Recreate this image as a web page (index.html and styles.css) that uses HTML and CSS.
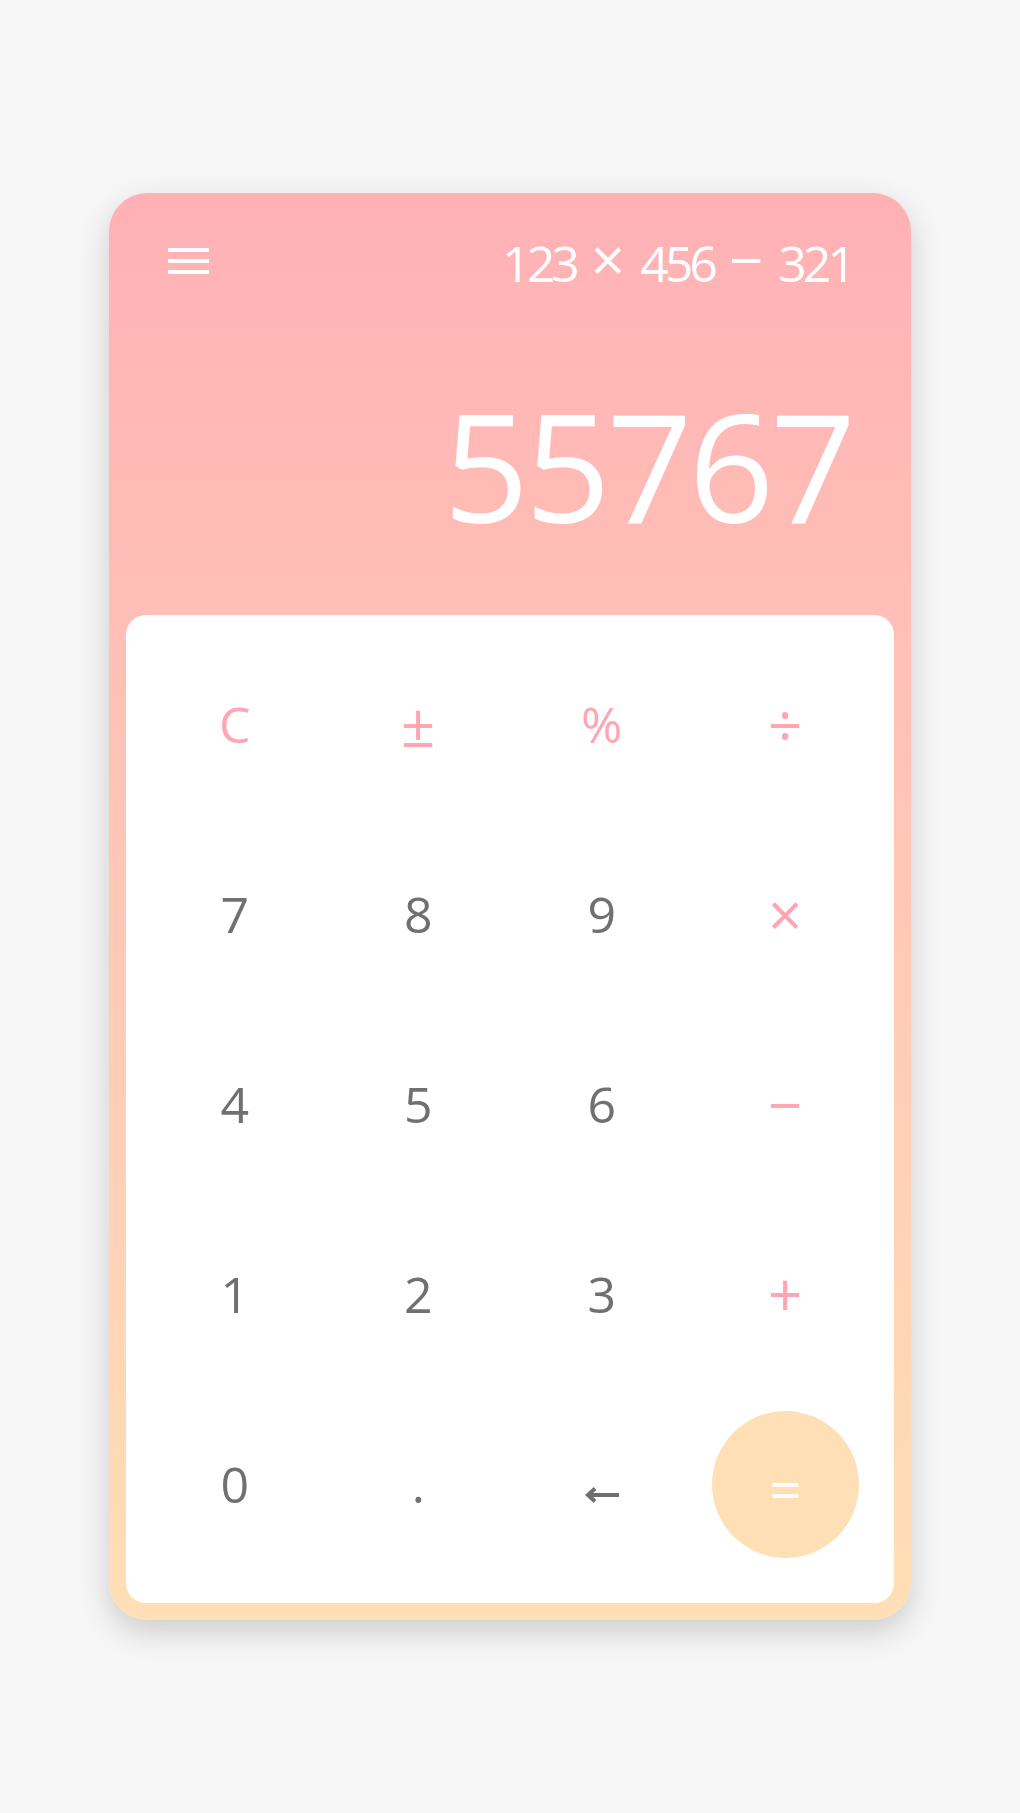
FILE: index.html
```html
<!DOCTYPE html>
<html lang="en">
<head>
    <meta charset="UTF-8">
    <meta name="viewport" content="width=device-width, initial-scale=1.0">
    <title>Calculator</title>
    <link rel="stylesheet" href="styles.css">
</head>
<body>

    <div class="calc">
        <div class="screen">
            <div class="topbar">
                <button class="menu" aria-label="menu">
                    <span></span><span></span><span></span>
                </button>
                <div class="expr">123 <span class="sign">×</span> 456 <span class="sign">−</span> 321</div>
            </div>
            <div class="result">55767</div>
        </div>

        <div class="keypad">
            <button class="key op">C</button>
            <button class="key op sym">±</button>
            <button class="key op">%</button>
            <button class="key op sym">÷</button>

            <button class="key">7</button>
            <button class="key">8</button>
            <button class="key">9</button>
            <button class="key op sym">×</button>

            <button class="key">4</button>
            <button class="key">5</button>
            <button class="key">6</button>
            <button class="key op sym">−</button>

            <button class="key">1</button>
            <button class="key">2</button>
            <button class="key">3</button>
            <button class="key op sym">+</button>

            <button class="key">0</button>
            <button class="key">.</button>
            <button class="key back" aria-label="backspace">
                <svg width="34" height="16" viewBox="0 0 34 16">
                    <path d="M3 8H34M10 1.5L3 8L10 14.5" fill="none" stroke="#6f6f6f" stroke-width="4"/>
                </svg>
            </button>
            <button class="key eq"><span class="circle">=</span></button>
        </div>
    </div>

</body>
</html>
```

FILE: styles.css
```css
body {
    margin: 0;
    padding: 0;
    background-color: #f6f6f6;
    font-family: "Open Sans", "Noto Sans", Arial, sans-serif;
    min-height: 100vh;
    display: flex;
    justify-content: center;
    align-items: center;
}

.calc {
    width: 802px;
    border-radius: 38px;
    background: linear-gradient(180deg, #ffb1b5 0%, #ffbfb7 30%, #ffdfb5 100%);
    box-shadow: 0 12px 30px rgba(0, 0, 0, 0.17);
    padding-bottom: 17px;
}

.screen {
    padding: 43px 59px 0 59px;
    color: #fff;
}

.topbar {
    display: flex;
    justify-content: space-between;
    align-items: center;
    height: 50px;
}

.menu {
    display: flex;
    flex-direction: column;
    gap: 7px;
    width: 41px;
    padding: 0;
    margin: 0;
    border: none;
    background: none;
    cursor: pointer;
}

.menu span {
    display: block;
    height: 4px;
    background-color: #fff;
}

.expr {
    font-size: 50px;
    line-height: 50px;
    letter-spacing: -4px;
    word-spacing: 6px;
    white-space: nowrap;
}

.expr .sign {
    font-size: 60px;
    letter-spacing: 0;
}

.result {
    margin-top: 104px;
    font-size: 150px;
    line-height: 150px;
    letter-spacing: -4px;
    text-align: right;
}

.keypad {
    margin: 75px 17px 0 17px;
    padding: 14px 17px 24px 17px;
    background-color: #fff;
    border-radius: 20px;
    display: grid;
    grid-template-columns: repeat(4, 1fr);
    grid-auto-rows: 190px;
}

.key {
    display: flex;
    justify-content: center;
    align-items: center;
    padding: 0;
    border: none;
    background: none;
    font-family: inherit;
    font-size: 50px;
    line-height: 50px;
    color: #707070;
    cursor: pointer;
}

.key.op {
    color: #ffa5b3;
}

.key.sym {
    font-size: 60px;
}

.key.back svg {
    margin-top: 22px;
}

.circle {
    display: flex;
    justify-content: center;
    align-items: center;
    width: 147px;
    height: 147px;
    border-radius: 50%;
    background-color: #ffdfb5;
    color: #fff;
    font-size: 56px;
    padding-top: 8px;
    box-sizing: border-box;
}
```
